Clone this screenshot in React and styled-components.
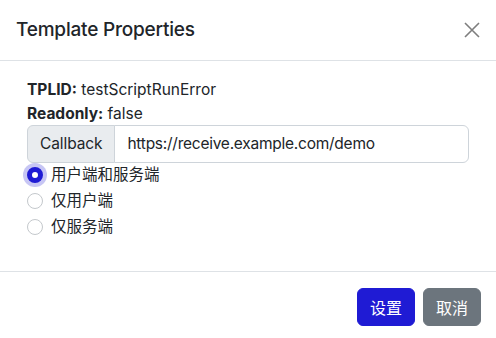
import React, { useState } from 'react';
import styled, { createGlobalStyle } from 'styled-components';

const GlobalStyle = createGlobalStyle`
  * { box-sizing: border-box; }
  html, body {
    margin: 0;
    padding: 0;
    background: #fff;
    font-family: Inter, "Noto Sans CJK SC", sans-serif;
    font-size: 16px;
    line-height: 1.5;
    color: #212529;
  }
`;

const Modal = styled.div`
  width: 496px;
  background: #fff;
`;

const Header = styled.div`
  display: flex;
  align-items: center;
  justify-content: space-between;
  height: 61px;
  padding: 0 12px 0 16px;
  border-bottom: 1px solid #dee2e6;
`;

const Title = styled.h5`
  margin: 0;
  font-size: 19px;
  font-weight: 500;
  letter-spacing: -0.2px;
  line-height: 30px;
`;

const CloseButton = styled.button`
  width: 24px;
  height: 24px;
  padding: 4px;
  border: 0;
  background: transparent;
  opacity: 0.5;
  display: flex;
  align-items: center;
  justify-content: center;
  cursor: pointer;
`;

const Body = styled.div`
  padding: 17px 27px 30px 27px;
`;

const InfoLine = styled.div`
  font-size: 15.5px;
  line-height: 23.5px;

  b {
    font-weight: 700;
  }
`;

const InputGroup = styled.div`
  display: flex;
  height: 38px;
`;

const Addon = styled.span`
  display: flex;
  align-items: center;
  padding: 0 12px;
  background: #e9ecef;
  border: 1px solid #ced4da;
  border-radius: 6px 0 0 6px;
  font-size: 15.5px;
  letter-spacing: -0.1px;
`;

const Input = styled.input`
  flex: 1;
  min-width: 0;
  padding: 0 12px;
  margin-left: -1px;
  border: 1px solid #ced4da;
  border-radius: 0 6px 6px 0;
  font: inherit;
  font-size: 15.5px;
  letter-spacing: -0.25px;
  color: #212529;
  outline: none;
`;

const Check = styled.label`
  display: flex;
  align-items: center;
  min-height: 24px;
  margin-bottom: 2px;
  font-size: 15.5px;
  cursor: pointer;
`;

const Radio = styled.span`
  width: 16px;
  height: 16px;
  margin-right: 8px;
  border-radius: 50%;
  flex: none;
  border: ${(p) => (p.$checked ? '5px solid #1f1bd4' : '1px solid #c4c8cc')};
  background: #fff;
  box-shadow: ${(p) => (p.$checked ? '0 0 0 4px rgba(31, 27, 212, 0.25)' : 'none')};
`;

const Footer = styled.div`
  display: flex;
  justify-content: flex-end;
  gap: 8px;
  padding: 16px 15px;
  border-top: 1px solid #dee2e6;
`;

const Button = styled.button`
  height: 38px;
  padding: 0 12px;
  border: 1px solid ${(p) => (p.$variant === 'primary' ? '#1f1bd4' : '#6c757d')};
  border-radius: 6px;
  background: ${(p) => (p.$variant === 'primary' ? '#1f1bd4' : '#6c757d')};
  color: #fff;
  font-family: "Noto Sans CJK SC", sans-serif;
  font-size: 16px;
  cursor: pointer;
`;

const options = ['用户端和服务端', '仅用户端', '仅服务端'];

export default function App() {
  const [mode, setMode] = useState(0);

  return (
    <>
      <GlobalStyle />
      <Modal>
        <Header>
          <Title>Template Properties</Title>
          <CloseButton aria-label="Close">
            <svg width="16" height="16" viewBox="0 0 16 16">
              <path d="M1 1L15 15M15 1L1 15" stroke="#000" strokeWidth="1.6" />
            </svg>
          </CloseButton>
        </Header>
        <Body>
          <InfoLine><b>TPLID:</b> testScriptRunError</InfoLine>
          <InfoLine><b>Readonly:</b> false</InfoLine>
          <InputGroup>
            <Addon>Callback</Addon>
            <Input defaultValue="https://receive.example.com/demo" />
          </InputGroup>
          {options.map((label, i) => (
            <Check key={label} onClick={() => setMode(i)}>
              <Radio $checked={mode === i} />
              {label}
            </Check>
          ))}
        </Body>
        <Footer>
          <Button $variant="primary">设置</Button>
          <Button>取消</Button>
        </Footer>
      </Modal>
    </>
  );
}
